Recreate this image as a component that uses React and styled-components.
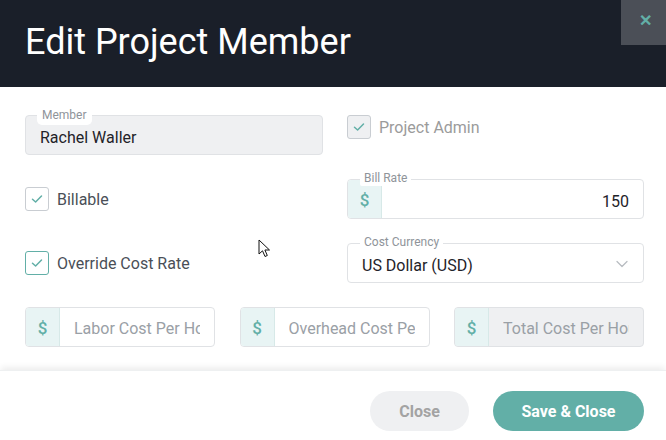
import React from 'react'
import styled, { createGlobalStyle } from 'styled-components'
import { ChevronDown } from 'lucide-react'

const GlobalStyle = createGlobalStyle`
    html, body {
        margin: 0;
        padding: 0;
        background: #fff;
    }
    * {
        box-sizing: border-box;
    }
`

const Check = () => (
    <svg width="14" height="14" viewBox="0 0 14 14" fill="none">
        <path d="M2.5 7.2 L5.6 10 L11.5 4" stroke="#62afa7" strokeWidth="1.5" strokeLinecap="round" strokeLinejoin="round" />
    </svg>
)

const Cursor = () => (
    <svg width="14" height="20" viewBox="0 0 14 20">
        <path d="M1 1 L1 15 L4.5 11.8 L7 17.5 L9.3 16.5 L6.9 11 L11.5 11 Z" fill="#fff" stroke="#111" strokeWidth="1" strokeLinejoin="round" />
    </svg>
)

const CheckField = ({ label, active, disabled, top }) => (
    <CheckRow top={top}>
        <Box active={active} disabled={disabled}><Check /></Box>
        <CheckLabel disabled={disabled}>{label}</CheckLabel>
    </CheckRow>
)

const App = () => {
    return (
        <Modal>
            <GlobalStyle />
            <Header>
                <Title>Edit Project Member</Title>
                <CloseX aria-label="close">✕</CloseX>
            </Header>
            <Body>
                <Grid>
                    <Field disabled>
                        <FloatLabel pill>Member</FloatLabel>
                        <Value>Rachel Waller</Value>
                    </Field>
                    <CheckField label="Project Admin" disabled top />

                    <CheckField label="Billable" />
                    <Field>
                        <FloatLabel>Bill Rate</FloatLabel>
                        <Addon>$</Addon>
                        <Value align="right">150</Value>
                    </Field>

                    <CheckField label="Override Cost Rate" active />
                    <Field>
                        <FloatLabel>Cost Currency</FloatLabel>
                        <Value>US Dollar (USD)</Value>
                        <Chevron size={20} strokeWidth={1.5} />
                    </Field>
                </Grid>
                <CostRow>
                    <Field>
                        <Addon>$</Addon>
                        <Input placeholder="Labor Cost Per Hour" />
                    </Field>
                    <Field>
                        <Addon>$</Addon>
                        <Input placeholder="Overhead Cost Per Hour" />
                    </Field>
                    <Field disabled>
                        <Addon>$</Addon>
                        <Input placeholder="Total Cost Per Hour" disabled />
                    </Field>
                </CostRow>
                <Pointer><Cursor /></Pointer>
            </Body>
            <Footer>
                <Button>Close</Button>
                <Button primary>Save &amp; Close</Button>
            </Footer>
        </Modal>
    )
}

export default App

const Modal = styled.div`
    width: 666px;
    height: 440px;
    overflow: hidden;
    display: flex;
    flex-direction: column;
    font-family: Roboto, "Liberation Sans", sans-serif;
    background: #fff;
`

const Header = styled.div`
    position: relative;
    height: 87px;
    flex-shrink: 0;
    background: #1a1f29;
    display: flex;
    align-items: center;
    padding: 0 0 4px 25px;
`

const Title = styled.h1`
    margin: 0;
    font-size: 36px;
    font-weight: 400;
    color: #fff;
    letter-spacing: 0;
`

const CloseX = styled.div`
    position: absolute;
    top: 0;
    right: 0;
    width: 45px;
    height: 45px;
    background: #4b4f57;
    color: #62afa7;
    font-size: 16px;
    font-weight: 700;
    display: flex;
    align-items: center;
    justify-content: center;
    padding: 0 0 4px 4px;
`

const Body = styled.div`
    position: relative;
    flex: 1;
    padding: 28px 22px 0 25px;
`

const Grid = styled.div`
    display: grid;
    grid-template-columns: 298px 297px;
    column-gap: 24px;
    row-gap: 24px;
    grid-auto-rows: 40px;
`

const CostRow = styled.div`
    display: grid;
    grid-template-columns: repeat(3, minmax(0, 1fr));
    column-gap: 24.5px;
    height: 40px;
    margin-top: 24px;
`

const CheckRow = styled.div`
    display: flex;
    align-items: ${p => p.top ? 'flex-start' : 'center'};
    gap: 8px;
`

const Box = styled.div`
    width: 24px;
    height: 24px;
    flex-shrink: 0;
    border-radius: 3px;
    border: 1px solid ${p => p.active ? '#62afa7' : '#c9cdd2'};
    background: ${p => p.disabled ? '#eff0f2' : '#fff'};
    display: flex;
    align-items: center;
    justify-content: center;
`

const CheckLabel = styled.span`
    font-size: 16px;
    line-height: 24px;
    padding-top: 1px;
    color: ${p => p.disabled ? '#9b9b9b' : '#4a4f57'};
`

const Field = styled.div`
    position: relative;
    display: flex;
    align-items: center;
    min-width: 0;
    height: 40px;
    border: 1px solid #e0e2e5;
    border-radius: 4px;
    background: ${p => p.disabled ? '#eff0f2' : '#fff'};
`

const FloatLabel = styled.span`
    position: absolute;
    top: -9px;
    left: ${p => p.pill ? '11px' : '12px'};
    padding: ${p => p.pill ? '1px 5px 2px' : '0 4px'};
    font-size: 12px;
    line-height: 15px;
    color: #8f949a;
    background: #fff;
    border-radius: ${p => p.pill ? '5px' : '2px'};
    z-index: 1;
`

const Value = styled.span`
    flex: 1;
    padding: 4px 14px 0;
    font-size: 16px;
    color: #1f2329;
    text-align: ${p => p.align || 'left'};
`

const Addon = styled.span`
    width: 34px;
    height: 100%;
    flex-shrink: 0;
    display: flex;
    align-items: center;
    justify-content: center;
    background: #e8f4f4;
    border-right: 1px solid #d7e9e8;
    border-radius: 3px 0 0 3px;
    color: #62afa7;
    font-size: 17px;
    font-weight: 500;
    padding-top: 2px;
`

const Input = styled.input`
    flex: 1;
    min-width: 0;
    width: 0;
    height: 100%;
    border: none;
    outline: none;
    background: transparent;
    padding: 2px 14px 0;
    font-family: inherit;
    font-size: 16px;
    color: #1f2329;
    &::placeholder {
        color: #9aa0a6;
    }
`

const Chevron = styled(ChevronDown)`
    color: #b8bcc1;
    margin-right: 11px;
    margin-top: 2px;
`

const Pointer = styled.div`
    position: absolute;
    left: 258px;
    top: 152px;
    pointer-events: none;
`

const Footer = styled.div`
    height: 70px;
    flex-shrink: 0;
    display: flex;
    justify-content: flex-end;
    align-items: flex-start;
    gap: 24px;
    padding: 20px 22px 0 0;
    box-shadow: 0 -4px 6px -1px rgba(0, 0, 0, 0.07);
    border-top: 1px solid #eef0f1;
`

const Button = styled.button`
    height: 40px;
    width: ${p => p.primary ? '151px' : '99px'};
    border: none;
    border-radius: 20px;
    font-family: inherit;
    font-size: 16px;
    font-weight: 700;
    background: ${p => p.primary ? '#62afa7' : '#eff0f2'};
    color: ${p => p.primary ? '#fff' : '#a3a3a3'};
    cursor: pointer;
`
